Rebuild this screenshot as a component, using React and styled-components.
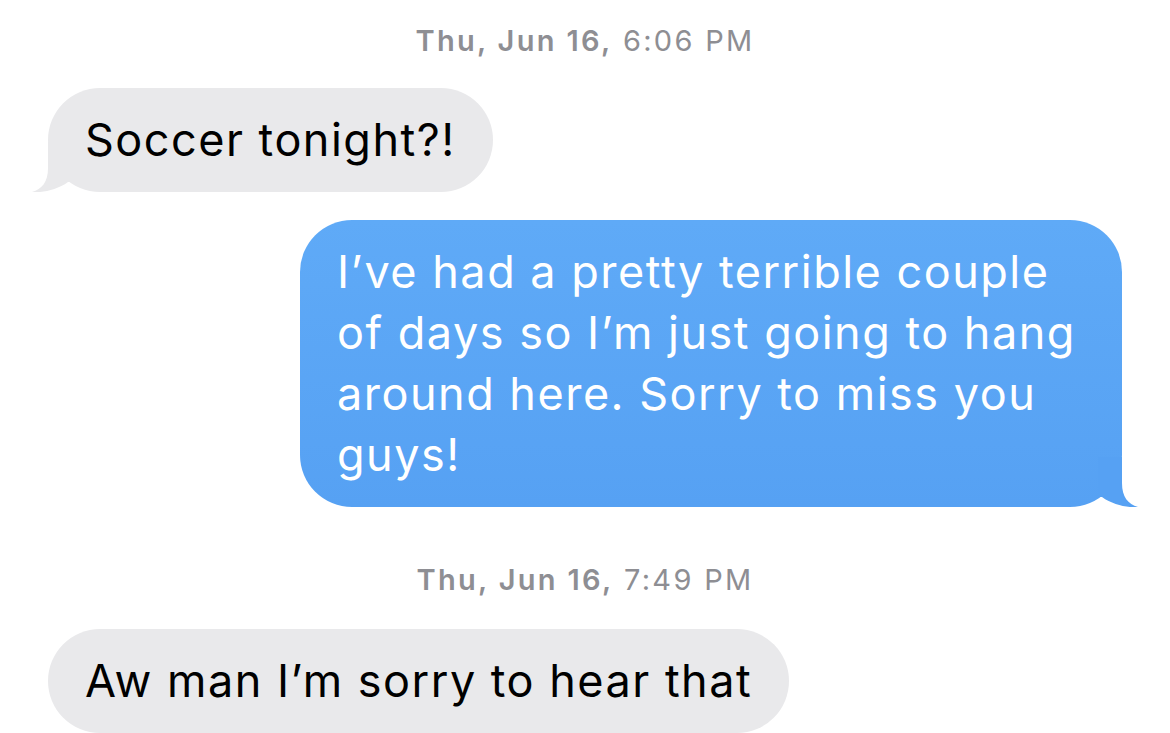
import React from 'react';
import styled, { createGlobalStyle } from 'styled-components';

const GlobalStyle = createGlobalStyle`
    html, body {
        margin: 0;
        padding: 0;
        background: #fff;
    }

    body {
        font-family: Inter, "Liberation Sans", sans-serif;
        -webkit-font-smoothing: antialiased;
    }
`;

const Thread = styled.div`
    width: 1170px;
    height: 733px;
    overflow: hidden;
    box-sizing: border-box;
    padding: 24px 48px 0;
    display: flex;
    flex-direction: column;
`;

const Stamp = styled.div`
    text-align: center;
    color: #8e8e93;
    font-size: 29px;
    line-height: 34px;
    letter-spacing: 2.3px;
    margin-top: ${props => props.$top || 0}px;

    b {
        font-weight: 600;
    }
`;

const Bubble = styled.div`
    position: relative;
    align-self: ${props => (props.$out ? 'flex-end' : 'flex-start')};
    width: ${props => (props.$width ? `${props.$width}px` : 'auto')};
    box-sizing: border-box;
    margin-top: ${props => props.$top}px;
    padding: 21px 37px 22px;
    border-radius: 52px;
    white-space: pre-line;
    font-size: 45px;
    line-height: 61px;
    letter-spacing: 1.5px;
    color: ${props => (props.$out ? '#fff' : '#000')};
    background: ${props => (props.$out ? 'linear-gradient(#5faaf7, #56a1f3)' : '#e9e9eb')};
`;

const TailSvg = styled.svg`
    position: absolute;
    bottom: 0;
    width: 40px;
    height: 50px;
    ${props => (props.$out ? 'right: -16px;' : 'left: -16px; transform: scaleX(-1);')}
`;

function Tail({ out, color }) {
    return (
        <TailSvg $out={out} viewBox="0 0 40 50">
            <path d="M0 0 H24 V26 C24 40 30 47 40 50 C30 51 15 48 4 40 L0 40 Z" fill={color} />
        </TailSvg>
    );
}

const messages = [
    { stamp: ['Thu, Jun 16,', '6:06 PM'], stampTop: 0 },
    { text: 'Soccer tonight?!', top: 30, tail: true },
    {
        text: 'I’ve had a pretty terrible couple\nof days so I’m just going to hang\naround here. Sorry to miss you\nguys!',
        top: 28,
        out: true,
        width: 822,
        tail: true
    },
    { stamp: ['Thu, Jun 16,', '7:49 PM'], stampTop: 56 },
    { text: 'Aw man I’m sorry to hear that', top: 32 }
];

export default function App() {
    return (
        <>
            <GlobalStyle />
            <Thread>
                {messages.map((m, i) => {
                    if (m.stamp) {
                        return (
                            <Stamp key={i} $top={m.stampTop}>
                                <b>{m.stamp[0]}</b> {m.stamp[1]}
                            </Stamp>
                        );
                    }

                    return (
                        <Bubble key={i} $out={m.out} $top={m.top} $width={m.width}>
                            {m.text}
                            {m.tail && <Tail out={m.out} color={m.out ? '#56a1f3' : '#e9e9eb'} />}
                        </Bubble>
                    );
                })}
            </Thread>
        </>
    );
}
